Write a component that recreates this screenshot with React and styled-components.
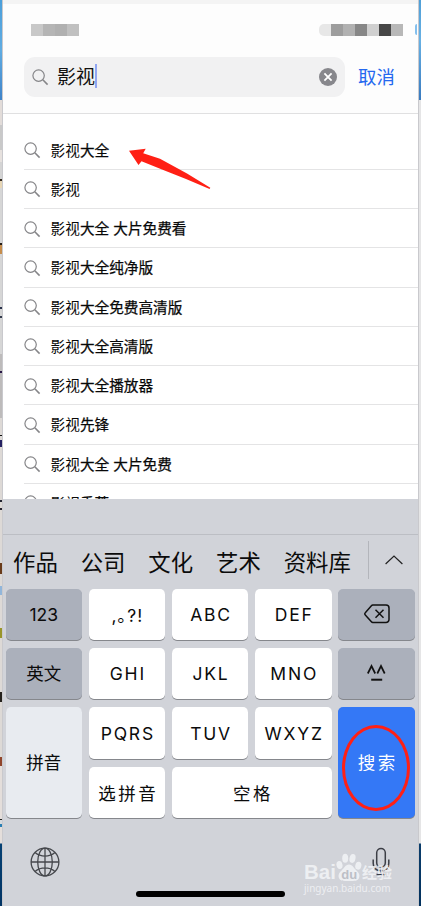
import React from "react";
import styled, { createGlobalStyle } from "styled-components";

const COLORS = {
  board: "#d1d3d9",
  darkKey: "#abb0bb",
  paleKey: "#e8ebf0",
  blue: "#3478f6",
  red: "#ff2015",
};

const FONT = `Inter, "Noto Sans CJK SC", sans-serif`;

const SUGGESTIONS = [
  ["影视大全", ""],
  ["影视", ""],
  ["影视大全", " 大片免费看"],
  ["影视大全", "纯净版"],
  ["影视大全", "免费高清版"],
  ["影视大全", "高清版"],
  ["影视大全", "播放器"],
  ["影视", "先锋"],
  ["影视大全", " 大片免费"],
  ["影视", "香蕉"],
];

const CANDIDATES = ["作品", "公司", "文化", "艺术", "资料库"];

const GlobalStyle = createGlobalStyle`
  * {
    box-sizing: border-box;
  }
  body {
    margin: 0;
    overflow: hidden;
    font-family: ${FONT};
    color: #0b0b0b;
  }
`;

const Page = styled.div`
  display: flex;
  width: 421px;
  height: 906px;
  overflow: hidden;
`;
const Strip = styled.div`
  width: 2px;
  flex: none;
  background: ${(p) => p.$fill};
`;
const Phone = styled.div`
  position: relative;
  display: flex;
  flex-direction: column;
  width: 417px;
  height: 906px;
  background: #fff;
  border-left: 1px solid #c9c9cd;
  border-right: 1px solid #c9c9cd;
`;
const Header = styled.header`
  height: 114px;
  flex: none;
  background: #fdfdfd;
  border-top: 4px solid #f4f4f4;
  border-bottom: 1px solid #e0e0e1;
`;
const StatusBar = styled.div`
  display: flex;
  justify-content: space-between;
  height: 53px;
  padding: 20px 0 0 28px;
`;
const Mosaic = styled.div`
  display: flex;
  height: 12px;
  margin-right: ${(p) => p.$right || 0}px;
`;
const Tile = styled.span`
  width: 12px;
  height: 12px;
  background: ${(p) => p.$tone};
  border-radius: ${(p) => (p.$round ? "5px 0 0 5px" : 0)};
`;
const SearchRow = styled.div`
  display: flex;
  align-items: center;
  padding-left: 21px;
`;
const SearchBox = styled.div`
  display: flex;
  align-items: center;
  width: 321px;
  height: 40px;
  padding: 0 8px 0 8px;
  border-radius: 11px;
  background: #f1f1f2;
`;
const Query = styled.span`
  margin-left: 8px;
  padding-top: 2px;
  font-size: 19px;
  line-height: 24px;
  color: #111;
`;
const Caret = styled.span`
  width: 2px;
  height: 24px;
  margin: 0 auto 2px 0;
  background: #91a6f2;
`;
const Cancel = styled.span`
  margin-left: 13px;
  font-size: 18.4px;
  line-height: 26px;
  color: #2468ef;
`;
const List = styled.ul`
  height: 385px;
  flex: none;
  margin: 0;
  padding: 16.5px 0 0 21px;
  overflow: hidden;
  list-style: none;
`;
const Item = styled.li`
  display: flex;
  align-items: center;
  height: 39.25px;
  border-bottom: 1px solid #e4e4e5;
  font-size: 14.65px;
  white-space: pre;
  color: #080808;

  svg {
    margin-top: 2px;
  }
`;
const ItemText = styled.span`
  margin-left: 9.6px;
  padding-bottom: 1px;
`;
const Strong = styled.span`
  -webkit-text-stroke: 0.25px #080808;
`;
const Keyboard = styled.section`
  display: flex;
  flex-direction: column;
  flex: 1;
  background: ${COLORS.board};
`;
const CandidateBar = styled.div`
  display: flex;
  align-items: center;
  height: 54.6px;
  margin-top: 35px;
  padding-left: 10px;
  border-top: 1px solid #bcbec4;
`;
const Candidates = styled.div`
  display: flex;
  gap: 22.9px;
  font-size: 22.4px;
  line-height: 30px;
  padding-top: 1.5px;
`;
const Expand = styled.div`
  display: flex;
  align-items: center;
  justify-content: center;
  width: 50px;
  height: 38px;
  margin: 0 0 4px auto;
  border-left: 1px solid #b3b5bb;
`;
const Keys = styled.div`
  display: grid;
  grid-template-columns: repeat(5, 76.5px);
  grid-template-rows: repeat(4, 51.5px);
  gap: 7.9px 6.7px;
  padding-left: 2.5px;
`;
const Key = styled.div`
  display: flex;
  align-items: center;
  justify-content: center;
  grid-column: span ${(p) => p.$cols || 1};
  grid-row: span ${(p) => p.$rows || 1};
  padding-left: ${(p) => p.$spacing || 0}px;
  padding-bottom: ${(p) => p.$lift || 0}px;
  border-radius: 5px;
  background: ${(p) => p.$fill || "#fff"};
  box-shadow: 0 1px 0 #85878c;
  color: ${(p) => p.$color || "#0b0b0b"};
  font-size: 17.5px;
  letter-spacing: ${(p) => p.$spacing || 0}px;
`;
const BottomBar = styled.div`
  display: flex;
  justify-content: space-between;
  padding: 28.7px 28px 0 27px;
`;
const HomeIndicator = styled.div`
  width: 149px;
  height: 6px;
  margin: auto 0 9px 133px;
  border-radius: 3px;
  background: #000;
`;
const Arrow = styled.svg`
  position: absolute;
  left: 125px;
  top: 146px;
`;
const Ring = styled.div`
  position: absolute;
  left: 339px;
  top: 725px;
  width: 68px;
  height: 86px;
  border: 3px solid ${COLORS.red};
  border-radius: 50%;
`;
const Badge = styled.div`
  position: absolute;
  left: 412px;
  top: 24px;
  width: 1.5px;
  height: 11px;
  border-radius: 2px 0 0 2px;
  background: #84c0ee;
`;
const Watermark = styled.div`
  position: absolute;
  left: 301px;
  top: 852px;
  color: #f3f4f7;
  opacity: 0.85;
`;
const WatermarkTop = styled.div`
  display: flex;
  align-items: flex-end;
  height: 30px;
  font: bold 20.5px/20px "Liberation Sans", sans-serif;
`;
const WatermarkCjk = styled.span`
  font: bold 15px/20px "Noto Sans CJK SC", sans-serif;
`;
const WatermarkUrl = styled.div`
  font: 10px/13px "Noto Sans", sans-serif;
`;

const SearchIcon = () => (
  <svg width="17" height="17" viewBox="0 0 17 17" fill="none" stroke="#858588">
    <circle cx="6.6" cy="6.6" r="5.7" strokeWidth="1.2" />
    <path d="M10.8 10.8L15.6 15.6" strokeWidth="1.6" />
  </svg>
);

const ClearIcon = () => (
  <svg width="18" height="18" viewBox="0 0 18 18">
    <circle cx="9" cy="9" r="9" fill="#87878c" />
    <path d="M5.4 5.4l7.2 7.2M12.6 5.4l-7.2 7.2" stroke="#fff" strokeWidth="1.8" />
  </svg>
);

const DeleteIcon = () => (
  <svg width="26" height="20" viewBox="0 0 26 20" fill="none" stroke="#111" strokeWidth="1.5">
    <path d="M8.8 1H22a3 3 0 0 1 3 3v11.5a3 3 0 0 1-3 3H8.8a2 2 0 0 1-1.4-.7L1.3 11a1.5 1.5 0 0 1 0-2.3L7.4 1.7A2 2 0 0 1 8.8 1Z" />
    <path d="M11.5 5.8l8 8M19.5 5.8l-8 8" />
  </svg>
);

const FaceIcon = () => (
  <svg width="20" height="18" viewBox="0 0 20 18" fill="none" stroke="#111" strokeWidth="1.7">
    <path d="M.8 9.5L4.5 2l3.7 7.5M10.3 9.5L14 2l3.7 7.5" />
    <path d="M4.2 15.7h11" strokeWidth="2" />
  </svg>
);

const GlobeIcon = () => (
  <svg width="30" height="30" viewBox="0 0 30 30" fill="none" stroke="#45474c" strokeWidth="1.3">
    <circle cx="15" cy="15" r="13.9" />
    <ellipse cx="15" cy="15" rx="7.3" ry="13.9" />
    <path d="M15 1v28M1 15h28M5 5.5c5.8 4.8 14.2 4.8 20 0M5 24.5c5.8-4.8 14.2-4.8 20 0" />
  </svg>
);

const MicIcon = () => (
  <svg width="18" height="30" viewBox="0 0 18 30" fill="none" stroke="#3c3e46" strokeWidth="1.5">
    <rect x="4.7" y="1.5" width="8.6" height="18.5" rx="4.3" />
    <path d="M1.2 12.5v3.7c0 4.6 3 7.4 7.8 7.4s7.8-2.8 7.8-7.4v-3.7M9 23.6v3.7M4.5 27.5h9" />
  </svg>
);

const PawIcon = () => (
  <svg width="26" height="29" viewBox="0 0 26 29" fill="currentColor">
    <ellipse cx="3.5" cy="12" rx="3" ry="4" transform="rotate(-12 3.5 12)" />
    <ellipse cx="9.2" cy="5.2" rx="3" ry="4.5" />
    <ellipse cx="16.5" cy="5.4" rx="3" ry="4.5" transform="rotate(12 16.5 5.4)" />
    <ellipse cx="22.3" cy="12.7" rx="3" ry="4" transform="rotate(14 22.3 12.7)" />
    <path d="M13 11.5c3.6 0 5 3.8 7.4 6 3.2 3 3.5 5.2 2.6 7.6-1.1 3-4 3-10 3s-8.9 0-10-3c-.9-2.4-.6-4.6 2.6-7.6 2.4-2.2 3.8-6 7.4-6Z" />
    <text x="5.2" y="25.7" fontFamily="Liberation Sans" fontWeight="bold" fontSize="13" fill="#b9bcc4">
      du
    </text>
  </svg>
);

const LEFT_FILL = `linear-gradient(#4b9fda, #60ace2 50px, #3f83c9 100px, #e2dcd9 100px 125px,
  #c9c9c9 125px 150px, #e6e1de 150px 162px, #d4d4d4 162px 179px, #33291d 179px 181px, #e7d6b5 181px 188px,
  #d6d6d6 188px 243px, #251d16 243px 245px, #c68d4c 245px 254px, #d6d6d6 254px 307px, #29314b 307px 309px,
  #d6d6d6 309px 316px, #333b4d 316px 318px, #d6d6d6 318px 354px, #bdbbbb 354px 371px, #281746 371px 373px,
  #bdbbbb 373px 418px, #ddd9d6 418px 435px, #111 435px 436px, #ddd9d6 436px 440px, #252262 440px 447px,
  #ddd9d6 447px 500px, #202330 500px 502px, #ddd9d6 502px 508px, #23212c 508px 510px, #ddd9d6 510px 563px,
  #693b1a 563px 574px, #ddd9d6 574px 586px, #92b6da 586px 595px, #ddd9d6 595px 628px, #99952a 628px 638px,
  #ddd9d6 638px 692px, #25221d 692px 702px, #ddd9d6 702px 757px, #90452b 757px 766px, #e4dedb 766px 819px,
  #222 819px 820px, #d6dade 820px 824px, #287eb4 824px 827px, #e4dedb 827px 843px, #064174 844px, #023464)`;

const RIGHT_FILL =
  "linear-gradient(#4f9fd7, #68b1e4 40px, #397abf 100px, #e5e5e6 100px 843px, #0b3d6c 844px, #02315d)";

const App = () => {
  return (
    <>
      <GlobalStyle />
      <Page>
        <Strip $fill={LEFT_FILL} />
        <Phone>
          <Header>
            <StatusBar>
              <Mosaic>
                <Tile $tone="#c8c8c8" />
                <Tile $tone="#b5b5b5" />
                <Tile $tone="#b0b0b0" />
                <Tile $tone="#c0c0c0" />
              </Mosaic>
              <Mosaic $right={15}>
                <Tile $tone="#e7e7e7" $round />
                <Tile $tone="#9d9d9d" />
                <Tile $tone="#b1b1b1" />
                <Tile $tone="#878787" />
                <Tile $tone="#d0d0d0" />
                <Tile $tone="#474747" />
                <Tile $tone="#b8b8b8" />
              </Mosaic>
            </StatusBar>
            <SearchRow>
              <SearchBox>
                <SearchIcon />
                <Query>影视</Query>
                <Caret />
                <ClearIcon />
              </SearchBox>
              <Cancel>取消</Cancel>
            </SearchRow>
          </Header>
          <List>
            {SUGGESTIONS.map(([typed, rest]) => (
              <Item key={typed + rest}>
                <SearchIcon />
                <ItemText>
                  {typed.slice(0, 2)}
                  <Strong>
                    {typed.slice(2)}
                    {rest}
                  </Strong>
                </ItemText>
              </Item>
            ))}
          </List>
          <Keyboard>
            <CandidateBar>
              <Candidates>
                {CANDIDATES.map((word) => (
                  <span key={word}>{word}</span>
                ))}
              </Candidates>
              <Expand>
                <svg width="18" height="10" viewBox="0 0 18 10" fill="none" stroke="#222" strokeWidth="1.2">
                  <path d="M.6 9L9 1l8.4 8" />
                </svg>
              </Expand>
            </CandidateBar>
            <Keys>
              <Key $fill={COLORS.darkKey}>123</Key>
              <Key $spacing={1}>,｡?!</Key>
              <Key $spacing={1.8}>ABC</Key>
              <Key $spacing={1.8}>DEF</Key>
              <Key $fill={COLORS.darkKey}>
                <DeleteIcon />
              </Key>
              <Key $fill={COLORS.darkKey} $lift={2}>
                英文
              </Key>
              <Key $spacing={1.8}>GHI</Key>
              <Key $spacing={1.8}>JKL</Key>
              <Key $spacing={1.8}>MNO</Key>
              <Key $fill={COLORS.darkKey} $lift={1}>
                <FaceIcon />
              </Key>
              <Key $fill={COLORS.paleKey} $rows={2} $lift={2}>
                拼音
              </Key>
              <Key $spacing={1.8}>PQRS</Key>
              <Key $spacing={1.8}>TUV</Key>
              <Key $spacing={1.8}>WXYZ</Key>
              <Key $fill={COLORS.blue} $color="#fff" $rows={2} $spacing={2.5} $lift={2}>
                搜索
              </Key>
              <Key $spacing={2.5} $lift={1}>
                选拼音
              </Key>
              <Key $cols={2} $spacing={2.5} $lift={1}>
                空格
              </Key>
            </Keys>
            <BottomBar>
              <GlobeIcon />
              <MicIcon />
            </BottomBar>
            <HomeIndicator />
          </Keyboard>
          <Badge />
          <Arrow width="84" height="46" viewBox="0 0 84 46" fill={COLORS.red}>
            <path d="M1 4.7L17.7 2.7L15.2 7.3L32 12.8L59 27.5L82.3 41.8L81.6 43L58 33L34 23.5L13.5 15.2L10.5 19Z" />
          </Arrow>
          <Ring />
          <Watermark>
            <WatermarkTop>
              Bai
              <PawIcon />
              <WatermarkCjk>经验</WatermarkCjk>
            </WatermarkTop>
            <WatermarkUrl>jingyan.baidu.com</WatermarkUrl>
          </Watermark>
        </Phone>
        <Strip $fill={RIGHT_FILL} />
      </Page>
    </>
  );
};

export default App;
